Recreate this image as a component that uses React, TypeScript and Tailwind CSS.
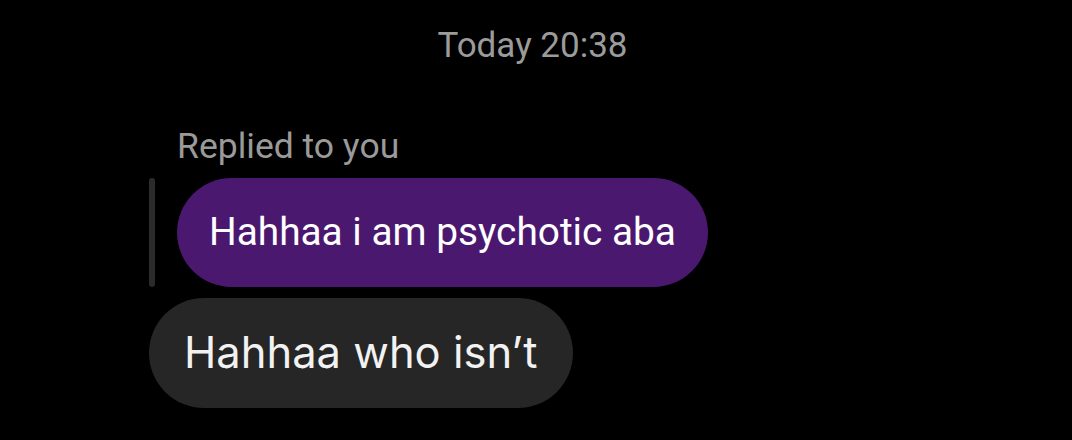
export default function App() {
  return (
    <div className="w-[1072px] h-[440px] bg-black overflow-hidden" style={{ fontFamily: 'Roboto, "Noto Sans", sans-serif' }}>
      <div className="flex flex-col">
        <div className="h-[92px] flex items-start justify-center pt-[24px] pr-[7px]">
          <span className="text-[35px] leading-[44px] text-[#9b9b9b]">Today 20:38</span>
        </div>
        <div className="pl-[177px] h-[86px] flex items-start pt-[34px]">
          <span className="text-[35.5px] leading-[40px] text-[#9a9a9a]">Replied to you</span>
        </div>
        <div className="flex items-stretch pl-[149px] gap-[22px]">
          <div className="w-[6px] h-[109px] rounded-full bg-[#2b2b2b]" />
          <div className="h-[109px] rounded-full bg-[#4b1870] flex items-center px-[32px]">
            <span className="text-[38.8px] text-white leading-none">Hahhaa i am psychotic aba</span>
          </div>
        </div>
        <div className="pl-[149px] pt-[11px] flex">
          <div className="h-[110px] rounded-full bg-[#262626] flex items-center pl-[35px] pr-[36px]">
            <span className="text-[43.5px] text-[#f2f2f2] leading-none font-['Inter',sans-serif]">Hahhaa who isn’t</span>
          </div>
        </div>
      </div>
    </div>
  );
}
